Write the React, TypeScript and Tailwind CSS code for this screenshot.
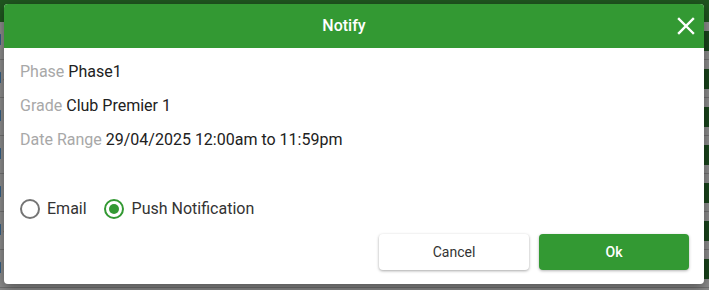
import React from "react";

const rows = ["1", "4", "0", "1", "3", "4", "0"];

export default function App() {
  return (
    <div className="relative w-[709px] h-[290px] overflow-hidden bg-white" style={{ fontFamily: "Roboto, 'Liberation Sans', sans-serif" }}>
      {/* page behind */}
      <div className="flex flex-col">
        <div className="h-[22px] bg-[#3a9c3a]" />
        {rows.map((r, i) => (
          <div key={i} className="h-[38px] flex items-center justify-between border-b border-[#d0d0d0] text-[15px] text-[#1a237e]">
            <span className="-ml-[5px]">{"1" + r}</span>
            <span className="w-[14px] h-[20px] rounded-[3px] bg-[#2e7d32] mr-[-6px]" />
          </div>
        ))}
      </div>
      {/* overlay */}
      <div className="absolute inset-0 bg-black/45" />
      {/* dialog */}
      <div className="absolute left-[4px] top-[4px] w-[700px] h-[280px] bg-white rounded-[4px] overflow-hidden shadow-[0_4px_12px_rgba(0,0,0,0.4)] flex flex-col">
        <div className="h-[44px] bg-[#339933] flex items-center text-white shrink-0">
          <div className="flex-1 text-center text-[16px] font-medium pl-[8px]">Notify</div>
          <button className="w-[20px] h-[20px] mr-[8px] flex items-center justify-center">
            <svg width="18" height="18" viewBox="0 0 18 18" fill="none" stroke="white" strokeWidth="2.4" strokeLinecap="square">
              <path d="M2 2 L16 16 M16 2 L2 16" />
            </svg>
          </button>
        </div>
        <div className="flex-1 flex flex-col pl-[16px] pr-[15px] pt-[7px] text-[16px]">
          <div className="h-[34px] flex items-center"><span className="text-[#a8a8a8]">Phase</span><span className="ml-[4px] text-[#212121]">Phase1</span></div>
          <div className="h-[34px] flex items-center"><span className="text-[#a8a8a8]">Grade</span><span className="ml-[4px] text-[#212121]">Club Premier 1</span></div>
          <div className="h-[34px] flex items-center"><span className="text-[#a8a8a8]">Date Range</span><span className="ml-[4px] text-[#212121]">29/04/2025 12:00am to 11:59pm</span></div>
          <div className="mt-[40px] flex items-center h-[24px] text-[#333]">
            <span className="w-[20px] h-[20px] rounded-full border-2 border-[#757575]" />
            <span className="ml-[7px]">Email</span>
            <span className="ml-[17px] w-[20px] h-[20px] rounded-full border-2 border-[#339933] flex items-center justify-center">
              <span className="w-[10px] h-[10px] rounded-full bg-[#339933]" />
            </span>
            <span className="ml-[8px]">Push Notification</span>
          </div>
          <div className="mt-[13px] flex justify-end gap-[10px]">
            <button className="w-[150px] h-[36px] rounded-[4px] bg-white text-[14px] text-[#333] shadow-[0_1px_3px_rgba(0,0,0,0.35)]">Cancel</button>
            <button className="w-[150px] h-[36px] rounded-[4px] bg-[#339933] text-[14px] font-medium text-white shadow-[0_1px_3px_rgba(0,0,0,0.3)]">Ok</button>
          </div>
        </div>
      </div>
    </div>
  );
}
